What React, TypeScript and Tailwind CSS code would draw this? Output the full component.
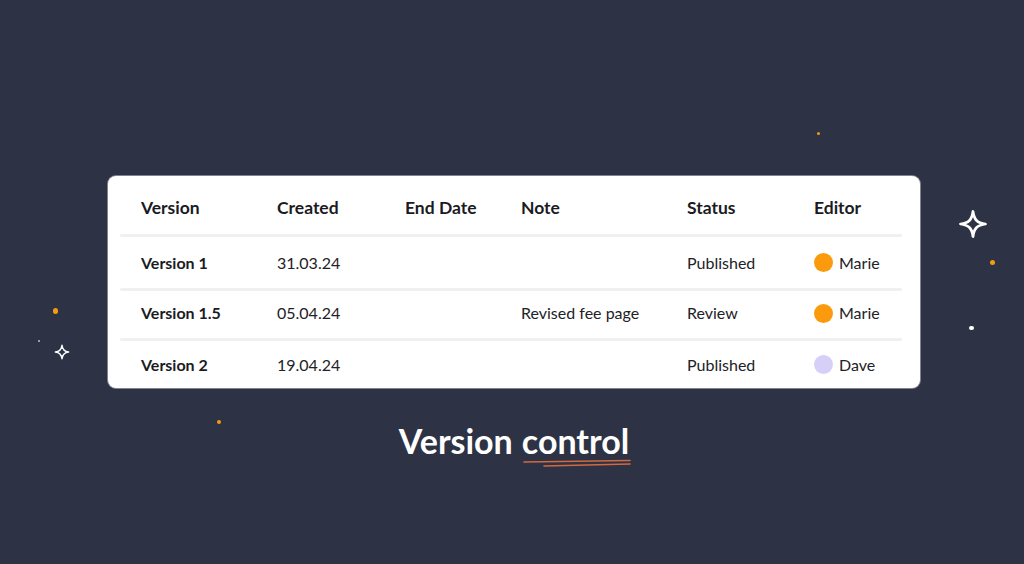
import React from "react";

const rows = [
  { version: "Version 1", created: "31.03.24", end: "", note: "", status: "Published", editor: "Marie", dot: "bg-[#fb9a0c]", h: "h-[51px]" },
  { version: "Version 1.5", created: "05.04.24", end: "", note: "Revised fee page", status: "Review", editor: "Marie", dot: "bg-[#fb9a0c]", h: "h-[47px] pb-[3px]" },
  { version: "Version 2", created: "19.04.24", end: "", note: "", status: "Published", editor: "Dave", dot: "bg-[#d6d0f8]", h: "h-[47px]" },
];

const cols = "grid grid-cols-[136px_128px_116px_166px_127px_1fr] items-center pl-[21px]";

function Sparkle({ size, className }: { size: number; className?: string }) {
  return (
    <svg width={size} height={size} viewBox="0 0 24 24" className={className} fill="none">
      <path
        d="M12 2 C12.8 8.5 15.5 11.2 22 12 C15.5 12.8 12.8 15.5 12 22 C11.2 15.5 8.5 12.8 2 12 C8.5 11.2 11.2 8.5 12 2 Z"
        stroke="white"
        strokeWidth="2.2"
        strokeLinejoin="round"
      />
    </svg>
  );
}

export default function App() {
  return (
    <div
      className="relative h-[564px] w-[1024px] overflow-hidden bg-[#2d3244]"
      style={{ fontFamily: "Lato, 'Noto Sans', sans-serif" }}
    >
      {/* decorations */}
      <Sparkle size={30} className="absolute left-[958px] top-[209px]" />
      <Sparkle size={16} className="absolute left-[54px] top-[344px]" />
      <span className="absolute left-[817px] top-[132px] h-[3px] w-[3px] rounded-full bg-[#f59a12]" />
      <span className="absolute left-[990px] top-[260px] h-[5px] w-[5px] rounded-full bg-[#f59a12]" />
      <span className="absolute left-[53px] top-[308px] h-[6px] w-[5px] rounded-full bg-[#f59a12]" />
      <span className="absolute left-[217px] top-[420px] h-[4px] w-[4px] rounded-full bg-[#f59a12]" />
      <span className="absolute left-[969px] top-[326px] h-[4px] w-[5px] rounded-full bg-white" />
      <span className="absolute left-[38px] top-[340px] h-[2px] w-[2px] rounded-full bg-white/70" />

      <div className="flex flex-col items-center pt-[176px]">
        <div className="ml-[4px] w-[812px] rounded-[8px] bg-white pl-3 pr-[18px] shadow-[0_0_0_1px_rgba(255,255,255,0.4)]">
          <div className={`${cols} h-[58px] pt-[7px] text-[17.5px] font-bold text-[#1b1b1f]`}>
            <span>Version</span>
            <span>Created</span>
            <span>End Date</span>
            <span>Note</span>
            <span>Status</span>
            <span>Editor</span>
          </div>
          {rows.map((r) => (
            <div key={r.version}>
              <div className="h-[3px] rounded-full bg-[#eef0f2]" />
              <div className={`${cols} ${r.h} text-[16px] text-[#222226]`}>
                <span className="font-bold text-[#1b1b1f]">{r.version}</span>
                <span>{r.created}</span>
                <span>{r.end}</span>
                <span>{r.note}</span>
                <span>{r.status}</span>
                <span className="flex items-center gap-[6px]">
                  <span className={`h-[19px] w-[19px] rounded-full ${r.dot}`} />
                  {r.editor}
                </span>
              </div>
            </div>
          ))}
        </div>

        <div className="mt-[31px] ml-[4px] flex items-baseline gap-[9px] text-[34px] font-bold leading-[44px] text-white">
          <span>Version</span>
          <span className="relative">
            control
            <svg
              width="112"
              height="10"
              viewBox="0 0 112 10"
              className="absolute left-0 top-[40px]"
              fill="none"
            >
              <path d="M2 3 L108 1.5" stroke="#d2693f" strokeWidth="1.6" strokeLinecap="round" />
              <path d="M22 7 L108 5" stroke="#d2693f" strokeWidth="1.6" strokeLinecap="round" />
            </svg>
          </span>
        </div>
      </div>
    </div>
  );
}
